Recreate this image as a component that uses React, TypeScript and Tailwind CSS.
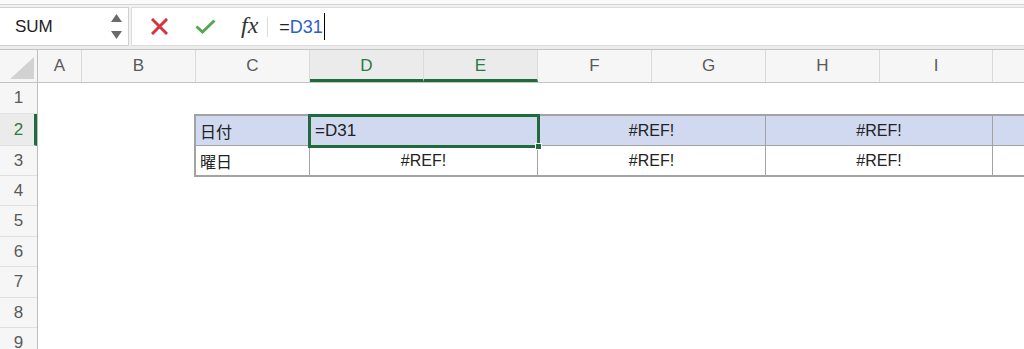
import { FC } from "react";

const COLS = [
  { label: "A", w: "w-[44px]" },
  { label: "B", w: "w-[114px]" },
  { label: "C", w: "w-[114px]" },
  { label: "D", w: "w-[114px]", active: true },
  { label: "E", w: "w-[114px]", active: true },
  { label: "F", w: "w-[114px]" },
  { label: "G", w: "w-[114px]" },
  { label: "H", w: "w-[114px]" },
  { label: "I", w: "w-[113px]" },
  { label: "", w: "w-[114px]" },
];

const ROWS = [
  { n: 1, h: "h-[31px]" },
  { n: 2, h: "h-[32px]", active: true },
  { n: 3, h: "h-[30px]" },
  { n: 4, h: "h-[30px]" },
  { n: 5, h: "h-[31px]" },
  { n: 6, h: "h-[30px]" },
  { n: 7, h: "h-[31px]" },
  { n: 8, h: "h-[30px]" },
  { n: 9, h: "h-[30px]" },
];

const FormulaBar: FC = () => (
  <div className="h-[49px] bg-[#f2f2f2] flex flex-col">
    <div className="h-[5px] bg-[#fafafa] border-b border-[#d4d4d4]" />
    <div className="flex h-[39px] mt-[2px]">
      <div className="w-[129px] bg-white border border-l-0 border-[#cfcfcf] flex items-center justify-between pl-[15px] pr-[6px]">
        <span className="text-[17px] text-[#222]">SUM</span>
        <div className="flex flex-col gap-[9px] items-center">
          <svg width="11" height="8" viewBox="0 0 11 8">
            <path d="M5.5 0 L11 8 L0 8 Z" fill="#6b6b6b" />
          </svg>
          <svg width="11" height="8" viewBox="0 0 11 8">
            <path d="M0 0 L11 0 L5.5 8 Z" fill="#6b6b6b" />
          </svg>
        </div>
      </div>
      <div className="flex-1 ml-[2px] bg-white border-l border-y border-[#dcdcdc] flex items-center">
        <svg className="ml-[19px]" width="17" height="17" viewBox="0 0 17 17">
          <path d="M2 2 L15 15 M15 2 L2 15" stroke="#d7343e" strokeWidth="3" strokeLinecap="square" />
        </svg>
        <svg className="ml-[27px]" width="21" height="15" viewBox="0 0 21 15">
          <path d="M1.5 7.5 L7.5 13 L19.5 1.5" stroke="#55a84f" strokeWidth="3" fill="none" />
        </svg>
        <span className="ml-[25px] text-[24px] italic text-[#333] font-['Liberation_Serif',serif] leading-none -mt-[3px]">
          fx
        </span>
        <div className="ml-[9px] w-px h-[20px] bg-[#dcdcdc]" />
        <span className="ml-[11px] text-[18px] text-[#222] leading-none">=</span>
        <span className="text-[18px] text-[#2f5dcc] leading-none">D31</span>
        <div className="w-px h-[27px] bg-black ml-px" />
      </div>
    </div>
    <div className="flex-1 bg-[#ececec]" />
  </div>
);

const ColumnHeader: FC = () => (
  <div className="flex h-[34px] bg-[#f6f6f6] border-y border-[#c3c3c3]">
    <div className="w-[38px] shrink-0 border-r border-[#bdbdbd] flex items-end justify-end pr-[3px] pb-[3px]">
      <svg width="24" height="22" viewBox="0 0 24 22">
        <path d="M24 0 L24 22 L0 22 Z" fill="#d2d2d2" />
      </svg>
    </div>
    {COLS.map((c, i) => (
      <div
        key={i}
        className={
          c.w +
          " shrink-0 flex items-center justify-center text-[17px] border-r border-[#dadada] " +
          (c.active
            ? "bg-[#ebebeb] text-[#2a7a46] border-b-[3px] border-b-[#1f6b3b] pt-[3px]"
            : "text-[#5a5a5a]")
        }
      >
        {c.label}
      </div>
    ))}
  </div>
);

const RowHeaders: FC = () => (
  <div className="w-[38px] shrink-0 flex flex-col bg-[#f6f6f6] border-r border-[#bdbdbd]">
    {ROWS.map((r) => (
      <div
        key={r.n}
        className={
          r.h +
          " shrink-0 flex items-center justify-center text-[17px] border-b border-[#e0e0e0] " +
          (r.active
            ? "bg-[#ebebeb] text-[#2a7a46] border-r-[3px] border-r-[#1f6b3b] pl-[3px]"
            : "text-[#5a5a5a]")
        }
      >
        {r.n}
      </div>
    ))}
  </div>
);

const Table: FC = () => (
  <div className="ml-[156px] border-2 border-r-0 border-[#a3a3a3] w-[900px] text-[16px] text-[#222]">
    <div className="flex h-[30px] bg-[#d0d9ef] border-b border-[#a3a3a3]">
      <div className="w-[114px] shrink-0 border-r border-[#a3a3a3] flex items-center pl-[4px] font-['Noto_Sans_CJK_JP',sans-serif]">
        日付
      </div>
      <div className="w-[228px] shrink-0 relative flex items-center pl-[5px] text-[17px]">
        =D31
        <div className="absolute -left-[2px] -top-[2px] -right-[2px] -bottom-[3px] border-[3px] border-[#1f6b3b]" />
        <div className="absolute -right-[4px] -bottom-[5px] w-[7px] h-[7px] bg-[#1f6b3b] border border-white" />
      </div>
      <div className="w-[228px] shrink-0 border-r border-[#a3a3a3] flex items-center justify-center">
        #REF!
      </div>
      <div className="w-[227px] shrink-0 border-r border-[#a3a3a3] flex items-center justify-center">
        #REF!
      </div>
      <div className="w-[114px] shrink-0" />
    </div>
    <div className="flex h-[29px] bg-white">
      <div className="w-[114px] shrink-0 border-r border-[#a3a3a3] flex items-center pl-[4px] font-['Noto_Sans_CJK_JP',sans-serif]">
        曜日
      </div>
      <div className="w-[228px] shrink-0 border-r border-[#a3a3a3] flex items-center justify-center">
        #REF!
      </div>
      <div className="w-[228px] shrink-0 border-r border-[#a3a3a3] flex items-center justify-center">
        #REF!
      </div>
      <div className="w-[227px] shrink-0 border-r border-[#a3a3a3] flex items-center justify-center">
        #REF!
      </div>
      <div className="w-[114px] shrink-0" />
    </div>
  </div>
);

const App: FC = () => {
  return (
    <div className="w-[1024px] h-[349px] overflow-hidden bg-white font-['Liberation_Sans','Noto_Sans_CJK_JP',sans-serif]">
      <FormulaBar />
      <ColumnHeader />
      <div className="flex">
        <RowHeaders />
        <div className="flex-1 flex flex-col">
          <div className="h-[31px] shrink-0" />
          <Table />
        </div>
      </div>
    </div>
  );
};

export default App;
